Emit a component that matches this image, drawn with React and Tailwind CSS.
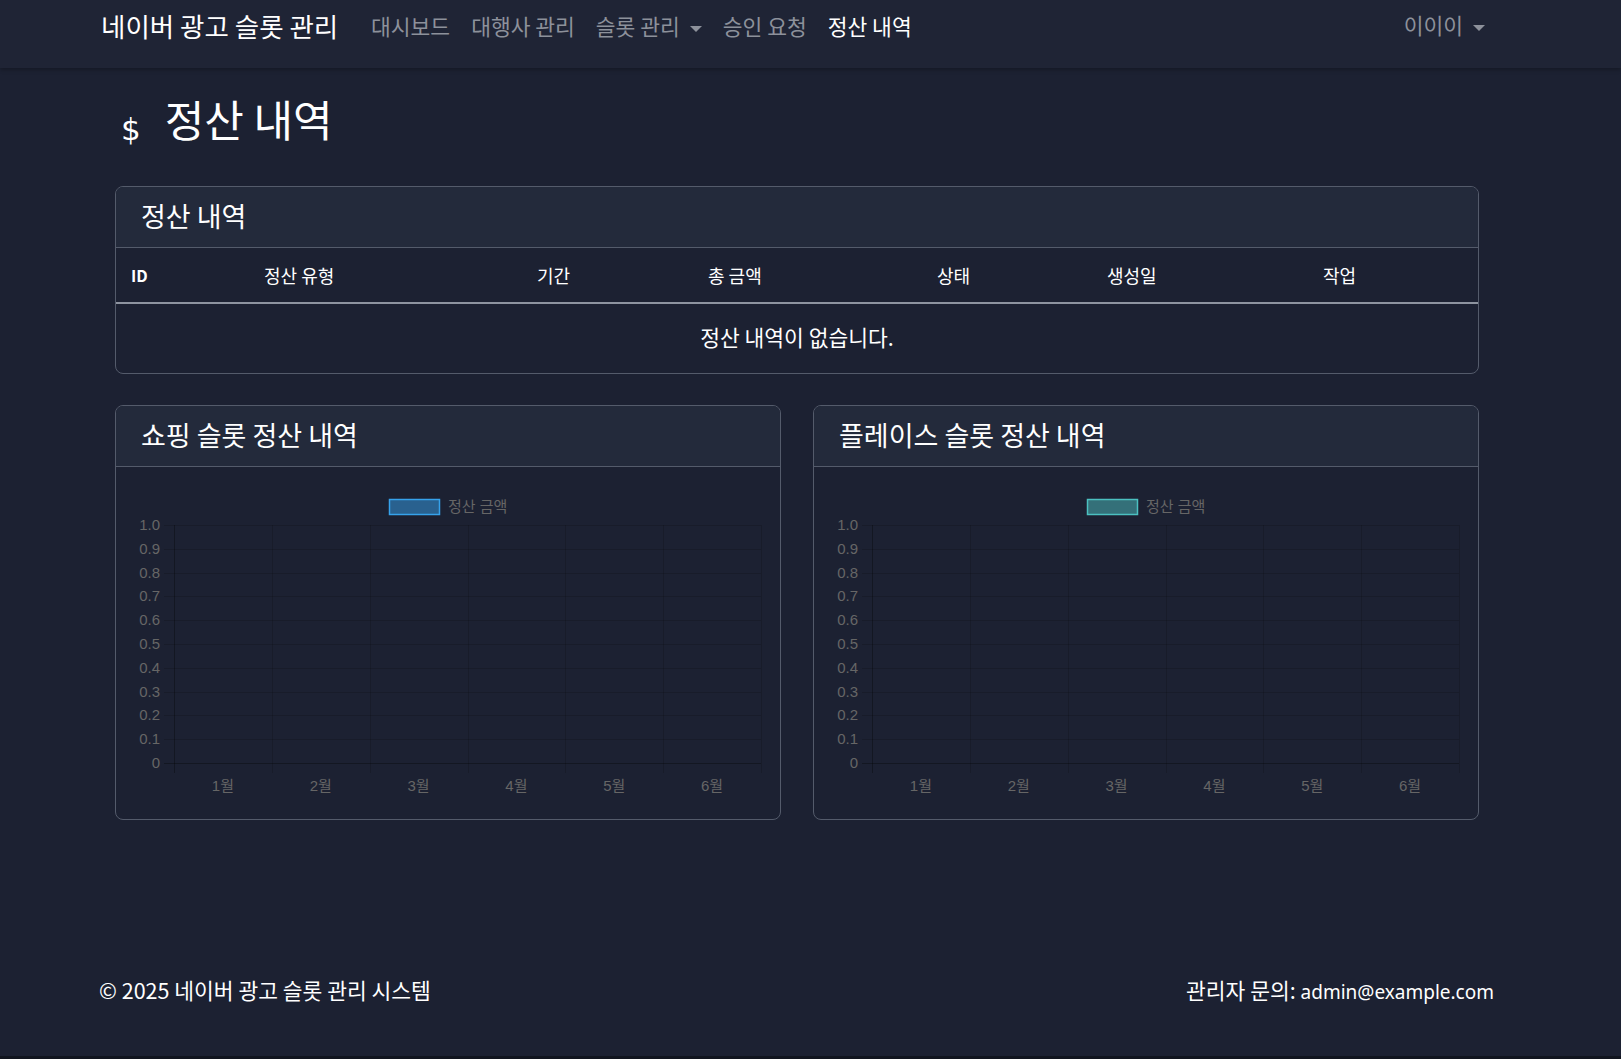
import React from 'react';

const months = ['1월', '2월', '3월', '4월', '5월', '6월'];
const ticks = ['1.0', '0.9', '0.8', '0.7', '0.6', '0.5', '0.4', '0.3', '0.2', '0.1', '0'];

function Caret() {
  return <span className="inline-block ml-[10px] w-0 h-0 border-x-[6px] border-x-transparent border-t-[6px] border-t-current align-middle" />;
}

// chart.js style empty bar chart, drawn as svg
function SettlementChart({ fill, stroke }) {
  const left = 58, right = 645, top = 58, bottom = 296;
  const colW = (right - left) / 6;
  const rowH = (bottom - top) / 10;
  const chartFont = '"Liberation Sans", "Noto Sans CJK KR", sans-serif';

  return (
    <svg width="664" height="352" viewBox="0 0 664 352" className="block">
      <rect x="273.5" y="32.5" width="50" height="15" fill={fill} stroke={stroke} strokeWidth="1.5" />
      <text x="332" y="41" fill="#666" fontSize="15" fontFamily={chartFont} dominantBaseline="middle">정산 금액</text>

      {ticks.map((t, i) => {
        const y = Math.round(top + i * rowH) + 0.5;
        return (
          <g key={t}>
            <line x1={left - 10} x2={right} y1={y} y2={y} stroke={i === 10 ? 'rgba(0,0,0,0.3)' : 'rgba(0,0,0,0.14)'} strokeWidth="1" />
            <text x="44" y={y + 1} fill="#666" fontSize="15" fontFamily={chartFont} textAnchor="end" dominantBaseline="middle">{t}</text>
          </g>
        );
      })}

      {[0, 1, 2, 3, 4, 5, 6].map((j) => {
        const x = Math.round(left + j * colW) + 0.5;
        return <line key={j} x1={x} x2={x} y1={top} y2={bottom + 10} stroke={j === 0 ? 'rgba(0,0,0,0.3)' : 'rgba(0,0,0,0.14)'} strokeWidth="1" />;
      })}

      {months.map((m, j) => (
        <text key={m} x={left + (j + 0.5) * colW} y="320" fill="#666" fontSize="15" fontFamily={chartFont} textAnchor="middle" dominantBaseline="middle">{m}</text>
      ))}
    </svg>
  );
}

function Card({ title, children, className = '' }) {
  return (
    <div className={`border border-[#545b6b] rounded-[8px] overflow-hidden ${className}`}>
      <div className="h-[61px] bg-[#232a3b] border-b border-[#545b6b] flex items-center pl-[25px] pb-[4px]">
        <h4 className="text-[27px] text-white leading-none">{title}</h4>
      </div>
      {children}
    </div>
  );
}

export default function App() {
  const navLinks = [
    { label: '대시보드' },
    { label: '대행사 관리' },
    { label: '슬롯 관리', dropdown: true },
    { label: '승인 요청' },
    { label: '정산 내역', active: true },
  ];

  const columns = [
    { label: 'ID', w: 'w-[133px]', bold: true },
    { label: '정산 유형', w: 'w-[273px]' },
    { label: '기간', w: 'w-[171px]' },
    { label: '총 금액', w: 'w-[229px]' },
    { label: '상태', w: 'w-[170px]' },
    { label: '생성일', w: 'w-[216px]' },
    { label: '작업', w: '' },
  ];

  return (
    <div className="min-h-screen flex flex-col bg-[#1c2132] text-white font-['Noto_Sans_CJK_KR','Noto_Sans',sans-serif]">
      {/* Navbar */}
      <nav className="h-[68px] bg-[#1f2435] shadow-[0_2px_4px_rgba(0,0,0,0.25)] flex items-start pl-[101px] pr-[136px] relative z-10">
        <a className="w-[270px] pt-[8px] text-[26.5px] leading-[36px] text-white whitespace-nowrap">네이버 광고 슬롯 관리</a>
        <ul className="flex gap-[21px] pt-[11px]">
          {navLinks.map((l) => (
            <li key={l.label} className={`text-[21.5px] leading-[30px] whitespace-nowrap ${l.active ? 'text-white' : 'text-[#8d919b]'}`}>
              {l.label}
              {l.dropdown && <Caret />}
            </li>
          ))}
        </ul>
        <div className="ml-auto pt-[10px] text-[21.5px] leading-[30px] text-[#8d919b]">
          이이이<Caret />
        </div>
      </nav>

      {/* Main */}
      <main className="flex-1 pl-[115px] pr-[142px] pt-[26px]">
        <h1 className="flex items-baseline h-[48px] pl-[6px]">
          <span className="text-[31px] leading-none font-['DejaVu_Sans',sans-serif] mr-[24px] translate-y-[3px]">$</span>
          <span className="text-[43px] leading-[48px]">정산 내역</span>
        </h1>

        <Card title="정산 내역" className="mt-[44px]">
          <table className="w-full table-fixed border-collapse">
            <thead>
              <tr className="h-[55px] border-b-2 border-[#8e94a0]">
                {columns.map((c) => (
                  <th key={c.label} className={`${c.w} text-left align-middle pl-[15px] ${c.bold ? 'font-bold text-[16px]' : 'font-normal text-[18px]'}`}>
                    {c.label}
                  </th>
                ))}
              </tr>
            </thead>
            <tbody>
              <tr className="h-[70px]">
                <td colSpan={7} className="text-center align-middle text-[21.5px] pb-[2px]">정산 내역이 없습니다.</td>
              </tr>
            </tbody>
          </table>
        </Card>

        <div className="grid grid-cols-2 gap-[32px] mt-[31px]">
          <Card title="쇼핑 슬롯 정산 내역">
            <SettlementChart fill="rgba(54,162,235,0.5)" stroke="rgb(54,162,235)" />
          </Card>
          <Card title="플레이스 슬롯 정산 내역">
            <SettlementChart fill="rgba(75,192,192,0.5)" stroke="rgb(75,192,192)" />
          </Card>
        </div>
      </main>

      {/* Footer */}
      <footer className="pt-[42px] pb-[49px] pl-[99px] pr-[127px] flex justify-between items-baseline leading-[30px]">
        <span className="text-[21.5px]">© 2025 네이버 광고 슬롯 관리 시스템</span>
        <span className="text-[21.5px]">
          관리자 문의: <span className="text-[19px] font-['Noto_Sans',sans-serif]">admin@example.com</span>
        </span>
      </footer>
      <div className="h-[3px] bg-[#11151f]" />
    </div>
  );
}
